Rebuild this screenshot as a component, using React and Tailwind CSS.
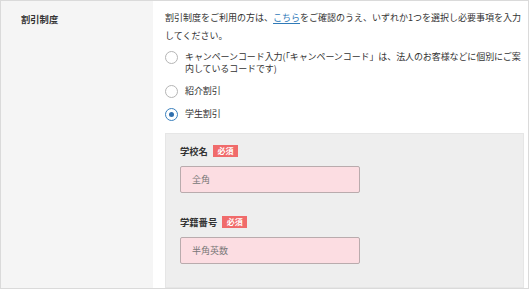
import React, { useState } from 'react';

const font = { fontFamily: '"Noto Sans CJK JP", "Noto Sans", sans-serif' };

function Radio({ checked, onChange, children }) {
  return (
    <label className="flex items-start gap-[7px] cursor-pointer" onClick={onChange}>
      <span
        className={
          'w-[13px] h-[13px] shrink-0 rounded-full border bg-white flex items-center justify-center ' +
          (checked ? 'border-[#3a80bd]' : 'border-[#b5b5b5]')
        }
      >
        {checked && <span className="w-[5px] h-[5px] rounded-full bg-[#2f6fae]" />}
      </span>
      <span className="text-[9px] leading-[12px] tracking-[-0.1px] text-[#333]">{children}</span>
    </label>
  );
}

function Required() {
  return (
    <span className="ml-[5px] inline-flex items-center justify-center w-[25px] h-[12px] bg-[#f06b6b] text-white text-[8px] font-bold leading-none">
      必須
    </span>
  );
}

function Field({ label, placeholder }) {
  return (
    <div>
      <div className="flex items-center h-[12px] leading-[12px]">
        <span className="text-[9.3px] font-bold text-[#333]">{label}</span>
        <Required />
      </div>
      <input
        type="text"
        placeholder={placeholder}
        className="block mt-[9px] w-[180px] h-[27px] px-[11px] rounded-[2px] border border-[#b9abad] bg-[#fcdde2] text-[9px] text-[#555] placeholder:text-[#777] outline-none"
      />
    </div>
  );
}

export default function App() {
  const [selected, setSelected] = useState('student');

  return (
    <div className="w-[530px] h-[290px] bg-white" style={font}>
      <div className="w-[529px] h-[289px] border border-[#dadada] flex overflow-hidden">
        {/* label column */}
        <div className="w-[152px] shrink-0 bg-[#f5f5f5] pl-[20px] pt-[11px]">
          <div className="text-[9.3px] leading-[14px] font-bold text-[#333]">割引制度</div>
        </div>

        {/* content */}
        <div className="flex-1 pl-[12px] pr-[4px] pt-[8px] flex flex-col">
          <p className="text-[9px] leading-[18px] text-[#333]">
            割引制度をご利用の方は、<a href="#" className="text-[#2f7ab8] underline underline-offset-2">こちら</a>をご確認のうえ、いずれか1つを選択し必要事項を入力してください。
          </p>

          <div className="mt-[6px] flex flex-col gap-[10px]">
            <Radio checked={selected === 'campaign'} onChange={() => setSelected('campaign')}>
              キャンペーンコード入力(「キャンペーンコード」は、法人のお客様などに個別にご案内しているコードです)
            </Radio>
            <Radio checked={selected === 'referral'} onChange={() => setSelected('referral')}>
              紹介割引
            </Radio>
            <Radio checked={selected === 'student'} onChange={() => setSelected('student')}>
              学生割引
            </Radio>
          </div>

          {selected === 'student' && (
            <div className="mt-[12px] flex-1 bg-[#eeeeee] border border-[#e6e6e6] pl-[14px] pt-[11px] flex flex-col gap-[23px]">
              <Field label="学校名" placeholder="全角" />
              <Field label="学籍番号" placeholder="半角英数" />
            </div>
          )}
        </div>
      </div>
    </div>
  );
}
